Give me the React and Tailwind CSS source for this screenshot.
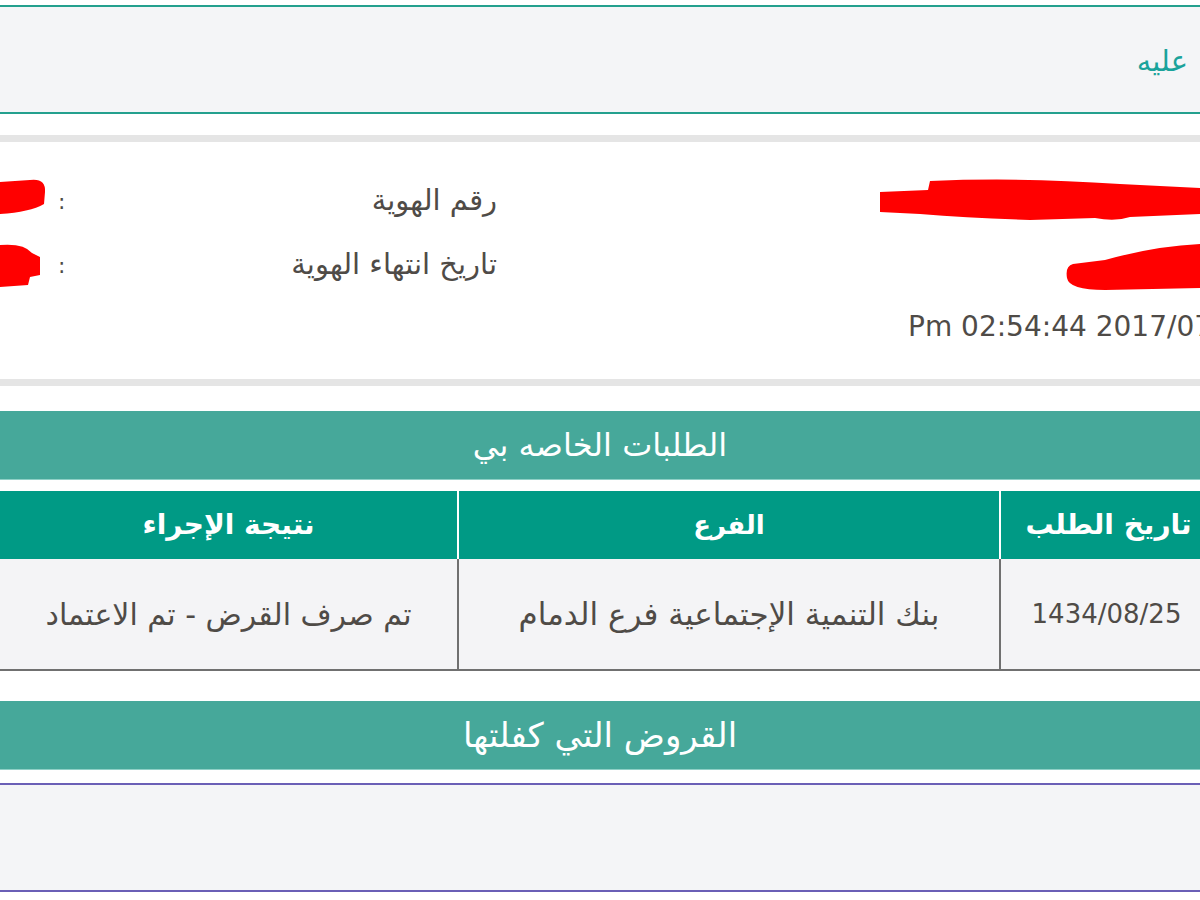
import React from 'react'

const font = "font-['DejaVu_Sans',sans-serif]"

// red marker strokes that hide the personal data
const Scribble = ({ className, d, w, h }) => (
  <svg className={className} width={w} height={h} viewBox={`0 0 ${w} ${h}`}>
    <path d={d} fill="#ff0000" />
  </svg>
)

const SectionHeader = ({ title, size }) => (
  <div className={`h-[69px] bg-[#46a89a] border-b border-[#8fd0c6] flex items-center justify-center text-white ${size}`}>
    {title}
  </div>
)

function InfoRow({ label, height, children }) {
  return (
    <div className="relative flex items-center" style={{ height }}>
      <div className="w-[700px]" />
      <div className="w-[500px] flex items-center">
        <div className="pr-[3px] text-[29px] text-[#4f4b47]">{label}</div>
        <div className="flex-1" />
        <div className="ml-[58px] text-[22px] text-[#4f4b47]">:</div>
      </div>
      {children}
    </div>
  )
}

export default function App() {
  return (
    <div dir="rtl" className={`w-[1200px] h-[900px] overflow-hidden bg-white text-[#555] ${font}`}>
      <div className="pt-[5px]">
        <div className="h-[109px] border-y-2 border-[#24a08e] bg-[#f4f5f7] flex items-center pr-[12px] pt-[4px] text-[#1aa39b] text-[29px]">
          عليه
        </div>
      </div>

      <div className="mt-[21px] h-[7px] bg-[#e5e5e5]" />

      <div className="h-[237px] pt-[27px]">
        <InfoRow label="رقم الهوية" height={64}>
          <Scribble
            className="absolute left-[880px] top-[9px]"
            w={320}
            h={44}
            d="M0,14 L48,12 L50,3 Q140,-1 240,6 L320,10 L320,36 L250,39 Q235,44 215,40 L150,42 Q90,40 40,36 L0,34 Z"
          />
          <Scribble
            className="absolute left-0 top-[9px]"
            w={46}
            h={38}
            d="M0,4 L30,2 Q46,0 45,14 L44,26 Q30,34 0,36 Z"
          />
        </InfoRow>
        <InfoRow label="تاريخ انتهاء الهوية" height={64}>
          <Scribble
            className="absolute left-[1065px] top-[11px]"
            w={135}
            h={48}
            d="M8,20 L40,16 Q90,2 135,0 L135,44 L40,46 Q4,46 2,34 Q0,22 8,20 Z"
          />
          <Scribble
            className="absolute left-0 top-[10px]"
            w={42}
            h={44}
            d="M0,2 Q24,0 32,10 L40,14 L40,32 L30,34 L28,42 L0,44 Z"
          />
        </InfoRow>
        <div dir="ltr" className="h-[60px] flex items-center pl-[908px] whitespace-nowrap text-[28px] text-[#4f4b47]">
          Pm 02:54:44 2017/07/12
        </div>
      </div>

      <div className="h-[7px] bg-[#e5e5e5]" />

      <div className="mt-[25px]">
        <SectionHeader title="الطلبات الخاصه بي" size="text-[32px]" />
      </div>

      <div className="mt-[11px]">
        <div className="h-[68px] flex bg-[#009a85] text-white font-bold">
          <div className="w-[199px] flex items-center justify-center pl-[16px] text-[28px]">تاريخ الطلب</div>
          <div className="w-[544px] border-x-2 border-white flex items-center justify-center text-[26px]">الفرع</div>
          <div className="w-[457px] flex items-center justify-center text-[28px]">نتيجة الإجراء</div>
        </div>
        <div className="h-[112px] flex bg-[#f4f4f6] border-b-2 border-[#707070] text-[#4f4b47]">
          <div className="w-[199px] flex items-center justify-center pl-[12px] text-[26px]">1434/08/25</div>
          <div className="w-[544px] border-x-2 border-[#707070] flex items-center justify-center text-[31px]">
            بنك التنمية الإجتماعية فرع الدمام
          </div>
          <div className="w-[457px] flex items-center justify-center text-[30px]">تم صرف القرض - تم الاعتماد</div>
        </div>
      </div>

      <div className="mt-[30px]">
        <SectionHeader title="القروض التي كفلتها" size="text-[34px]" />
      </div>

      <div className="mt-[13px] h-[109px] border-y-2 border-[#6a5fb6] bg-[#f4f5f7]" />
    </div>
  )
}
